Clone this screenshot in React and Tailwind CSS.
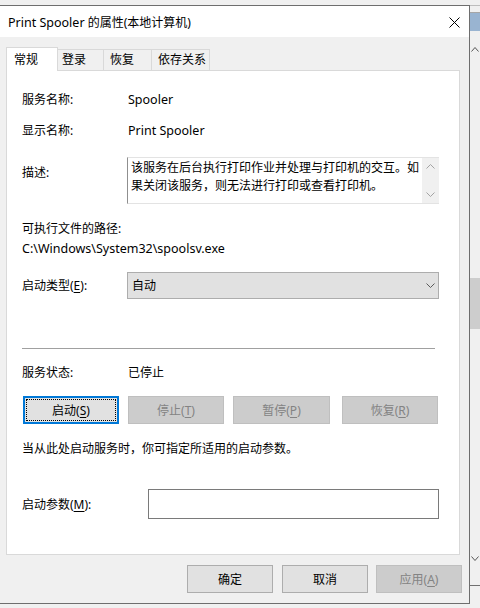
import React from "react";

const U = ({ children }) => <span className="underline underline-offset-2">{children}</span>;
const L = ({ children }) => <span className="text-[12.5px]">{children}</span>;

function Chevron({ dir = "down", color = "#606060", w = 9, h = 5 }) {
  const d = dir === "down" ? `M0.5 0.5 L${w / 2} ${h - 0.5} L${w - 0.5} 0.5` : `M0.5 ${h - 0.5} L${w / 2} 0.5 L${w - 0.5} ${h - 0.5}`;
  return (
    <svg width={w} height={h} viewBox={`0 0 ${w} ${h}`} className="block">
      <path d={d} fill="none" stroke={color} strokeWidth="1" />
    </svg>
  );
}

function DisabledBtn({ w, children, cls = "" }) {
  return (
    <div className={`h-[28px] ${w} ${cls} bg-[#cccccc] border border-[#bfbfbf] flex items-center justify-center text-[#838383]`}>
      {children}
    </div>
  );
}

export default function App() {
  return (
    <div className="w-[480px] h-[608px] bg-[#f0f0f0] flex overflow-hidden text-[12px] leading-[16px] text-black font-['Noto_Sans','Noto_Sans_CJK_SC',sans-serif]">
      {/* Dialog column */}
      <div className="w-[470px] flex flex-col shrink-0">
        <div className="h-[5px]" />
        <div className="h-[599px] border-t border-r border-b border-[#6e6e6e] bg-[#f0f0f0] flex flex-col">
          {/* Title bar */}
          <div className="h-[31px] bg-white flex items-center justify-between pl-[8px]">
            <span className="pt-[2px]"><L>Print Spooler</L> 的属性(本地计算机)</span>
            <svg width="11" height="11" viewBox="0 0 11 11" className="mr-[9px] mt-[1px]">
              <path d="M0.5 0.5 L10.5 10.5 M10.5 0.5 L0.5 10.5" stroke="#000" strokeWidth="1" />
            </svg>
          </div>
          {/* Body */}
          <div className="pt-[10px] pl-[6px] flex flex-col">
            {/* Tabs */}
            <div className="flex items-end h-[23px] relative z-10">
              <div className="w-[52px] h-[24px] mb-[-1px] bg-white border-l border-t border-r border-[#d9d9d9] flex items-center pl-[7px]">
                常规
              </div>
              <div className="w-[46px] h-[21px] border-t border-r border-[#d9d9d9] flex items-center pl-[4px]">登录</div>
              <div className="w-[48px] h-[21px] border-t border-r border-[#d9d9d9] flex items-center pl-[6px]">恢复</div>
              <div className="w-[58px] h-[21px] border-t border-r border-[#d9d9d9] flex items-center pl-[6px]">依存关系</div>
            </div>
            {/* Panel */}
            <div className="w-[454px] h-[485px] bg-white border border-[#d9d9d9] pl-[15px] flex flex-col">
              <div className="mt-[21px] h-[16px] flex">
                <span className="w-[106px]">服务名称:</span>
                <L>Spooler</L>
              </div>
              <div className="mt-[15px] h-[16px] flex">
                <span className="w-[106px]">显示名称:</span>
                <L>Print Spooler</L>
              </div>
              <div className="mt-[18px] flex">
                <span className="w-[105px] pt-[8px]">描述:</span>
                <div className="w-[312px] h-[47px] border-l border-t border-b border-l-[#8f8f8f] border-t-[#e3e3e3] border-b-[#e3e3e3] flex">
                  <div className="flex-1 pl-[3px] pt-[1px] leading-[18px]">
                    <div>该服务在后台执行打印作业并处理与打印机的交互。如</div>
                    <div>果关闭该服务，则无法进行打印或查看打印机。</div>
                  </div>
                  <div className="w-[17px] bg-[#f0f0f0] flex flex-col justify-between items-center py-[6px]">
                    <Chevron dir="up" color="#a3a3a3" w={9} h={5} />
                    <Chevron dir="down" color="#a3a3a3" w={9} h={5} />
                  </div>
                </div>
              </div>
              <div className="mt-[17px] h-[16px]">可执行文件的路径:</div>
              <div className="mt-[4px] h-[16px]"><L>C:\Windows\System32\spoolsv.exe</L></div>
              <div className="mt-[15px] flex items-center">
                <span className="w-[105px] pt-[1px]">
                  启动类型(<U>E</U>):
                </span>
                <div className="w-[312px] h-[27px] bg-[#e1e1e1] border border-[#adadad] flex items-center justify-between pl-[4px] pr-[3px]">
                  <span className="pt-[1px]">自动</span>
                  <Chevron dir="down" color="#5a5a5a" w={9} h={5} />
                </div>
              </div>
              <div className="mt-[49px] h-[1px] w-[413px] bg-[#a0a0a0]" />
              <div className="mt-[16px] h-[16px] flex">
                <span className="w-[106px]">服务状态:</span>
                <span>已停止</span>
              </div>
              <div className="mt-[15px] ml-[1px] flex">
                <div className="w-[96px] h-[28px] bg-[#e1e1e1] border-2 border-[#0078d7] p-[1px]">
                  <div className="w-full h-full border border-dotted border-black flex items-center justify-center">
                    <span className="pt-[1px]">
                      启动(<U>S</U>)
                    </span>
                  </div>
                </div>
                <DisabledBtn w="w-[96px]" cls="ml-[9px]">
                  <span className="pt-[1px]">停止(<U>T</U>)</span>
                </DisabledBtn>
                <DisabledBtn w="w-[97px]" cls="ml-[9px]">
                  <span className="pt-[1px]">暂停(<U>P</U>)</span>
                </DisabledBtn>
                <DisabledBtn w="w-[96px]" cls="ml-[12px]">
                  <span className="pt-[1px]">恢复(<U>R</U>)</span>
                </DisabledBtn>
              </div>
              <div className="mt-[17px] h-[16px]">当从此处启动服务时，你可指定所适用的启动参数。</div>
              <div className="mt-[32px] flex items-center">
                <span className="w-[126px] pt-[1px]">
                  启动参数(<U>M</U>):
                </span>
                <div className="w-[291px] h-[30px] bg-white border border-[#7a7a7a]" />
              </div>
            </div>
            {/* Bottom buttons */}
            <div className="mt-[10px] flex pl-[181px]">
              <div className="w-[86px] h-[28px] bg-[#e1e1e1] border border-[#adadad] flex items-center justify-center pt-[1px]">确定</div>
              <div className="ml-[9px] w-[86px] h-[28px] bg-[#e1e1e1] border border-[#adadad] flex items-center justify-center pt-[1px]">取消</div>
              <DisabledBtn w="w-[86px]" cls="ml-[8px]">
                <span className="pt-[1px]">应用(<U>A</U>)</span>
              </DisabledBtn>
            </div>
          </div>
        </div>
      </div>
      {/* Background window strip */}
      <div className="w-[10px] flex flex-col shrink-0">
        <div className="h-[5px]" />
        <div className="h-[1px] bg-[#bdbdbd]" />
        <div className="h-[6px]" />
        <div className="h-[1px] bg-[#a6a6a6]" />
        <div className="h-[18px] bg-[#99b4d1]" />
        <div className="h-[16px]" />
        <div className="pl-[1px]">
          <Chevron dir="up" color="#555555" w={8} h={5} />
        </div>
        <div className="h-[226px]" />
        <div className="h-[51px] bg-[#cdcdcd]" />
        <div className="h-[227px]" />
        <div className="pl-[1px]">
          <Chevron dir="down" color="#555555" w={8} h={5} />
        </div>
        <div className="h-[24px]" />
        <div className="h-[1px] bg-[#707070]" />
      </div>
    </div>
  );
}
